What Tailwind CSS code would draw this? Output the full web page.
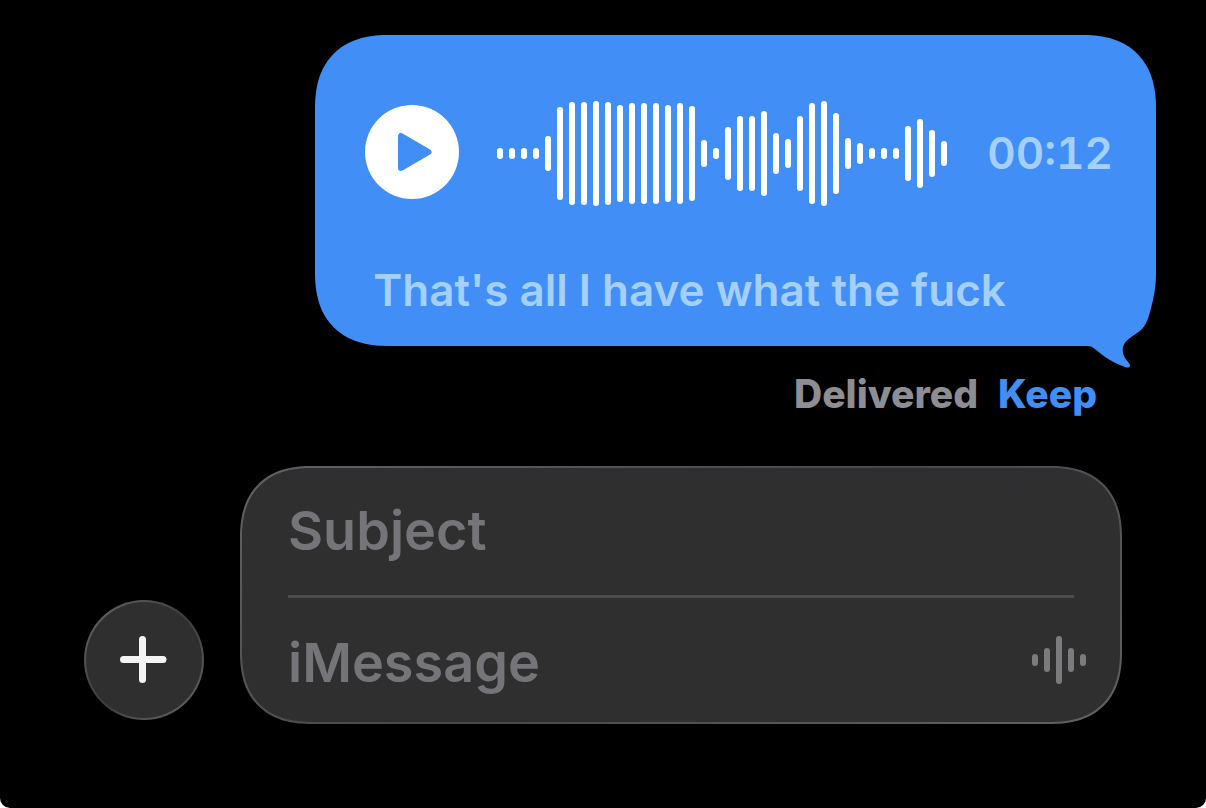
<!DOCTYPE html>
<html lang="en">
  <head>
    <meta charset="UTF-8" />
    <meta name="viewport" content="width=device-width, initial-scale=1.0" />
    <script src="https://cdn.jsdelivr.net/npm/@tailwindcss/browser@4"></script>
    <title>Messages</title>
  </head>
  <body class="bg-white">
    <div
      class="min-h-screen bg-black rounded-b-[10px] flex flex-col font-['Inter',sans-serif]"
    >
      <main class="pt-[35px] pr-[50px] flex flex-col items-end">
        <!-- Audio message -->
        <div
          class="relative w-fit bg-[#418ff6] rounded-[74px] [corner-shape:superellipse(1.25)] pt-[66px] pl-[50px] pr-[43px] pb-[28px]"
        >
          <div class="flex items-center">
            <button type="button" aria-label="Play" class="shrink-0 pb-[3px]">
              <svg class="w-[94px] h-[94px]" viewBox="0 0 94 94">
                <circle cx="47" cy="47" r="47" fill="#fff" />
                <path
                  d="M36 31v32L63.500 47z"
                  fill="#418ff6"
                  stroke="#418ff6"
                  stroke-width="6"
                  stroke-linejoin="round"
                />
              </svg>
            </button>
            <svg
              class="ml-[38px] w-[450px] h-[105px] shrink-0"
              viewBox="0 0 450 105"
              fill="none"
              stroke="#fff"
              stroke-width="6"
              stroke-linecap="round"
            >
              <path
                d="M3 50v5M15 50v5M27 50v5M39 50v5M51 38v29M63 9v87M75 4v97M87 4v97M99 3v99M111 4v97M123 7v91M135 5v95M147 5v95M159 5v95M171 7v91M183 5v95M195 8v89M207 42v21M219 50v5M231 29v47M243 18v69M255 18v69M267 13v79M279 35v35M291 41v23M303 18v69M315 5v95M327 3v99M339 15v75M351 40v25M363 45v15M375 50v5M387 50v5M399 50v5M411 28v49M423 21v63M435 32v41M447 43v19"
              />
            </svg>
            <span
              class="ml-[40px] pb-[2px] text-[44px] leading-[52px] font-semibold tabular-nums text-[#a5d0fd]"
              >00:12</span
            >
          </div>
          <p
            class="mt-[56px] ml-2 text-[44px] leading-[56px] font-semibold text-[#a5d0fd]"
          >
            That's all I have what the fuck
          </p>
          <!-- Bubble tail -->
          <svg
            class="absolute right-0 bottom-[-22px] w-[80px] h-[70px]"
            viewBox="0 0 80 70"
          >
            <path d="M80 0V70H0V48H14L47 36L78 0Z" fill="#000" />
            <path
              d="M0 0H77.500C74 14 72 25 66 31C62 35 57 37 54 40C46 45 45 53 49 60C51 63 54 66 54 67C54 70 52 70 49 69C33 64 22 53 16 49C14 48 13 48 10 48H0Z"
              fill="#418ff6"
            />
          </svg>
        </div>
        <p
          class="mt-[24px] mr-[59px] flex gap-[20px] text-[39px] leading-[48px] font-extrabold text-[#8e8d93]"
        >
          Delivered
          <button type="button" class="text-[#418ff6]">Keep</button>
        </p>
      </main>

      <!-- Composer -->
      <form class="mt-auto px-[84px] pb-[84px] flex items-end gap-9">
        <button
          type="button"
          aria-label="Add attachment"
          class="shrink-0 w-[120px] h-[120px] mb-1 rounded-full p-[2px] bg-linear-135 from-[#6a6a6a] via-[#3c3c3c] to-[#6a6a6a]"
        >
          <span
            class="w-full h-full rounded-full bg-[#2f2f2f] flex items-center justify-center"
          >
            <svg
              class="w-12 h-12"
              viewBox="0 0 48 48"
              stroke="#f4f4f4"
              stroke-width="7"
              stroke-linecap="round"
            >
              <path d="M3.500 23.500h39.500M22.500 3.500v40" />
            </svg>
          </span>
        </button>
        <div
          class="flex-1 min-w-0 rounded-[72px] [corner-shape:superellipse(1.25)] p-[2px] bg-linear-150 from-[#626264] via-[#48484a] to-[#626264]"
        >
          <div
            class="rounded-[70px] [corner-shape:superellipse(1.25)] bg-linear-to-b from-[#2f2f31] to-[#2f2f2f] pl-[46px] pr-[34px]"
          >
            <div class="mr-3 border-b-3 border-[#4c4b4d]">
              <input
                type="text"
                aria-label="Subject"
                placeholder="Subject"
                class="block w-full h-[127px] pb-[2px] text-[54px] font-semibold text-white placeholder:text-[#747479] outline-none"
              />
            </div>
            <div class="flex items-center">
              <input
                type="text"
                aria-label="iMessage"
                placeholder="iMessage"
                class="block flex-1 min-w-0 h-[124px] pt-[4px] text-[54px] font-semibold text-white placeholder:text-[#747479] outline-none"
              />
              <button type="button" aria-label="Record audio">
                <svg
                  class="w-[54px] h-12"
                  viewBox="0 0 54 48"
                  stroke="#7b7b7d"
                  stroke-width="6"
                  stroke-linecap="round"
                >
                  <path d="M3 21v6M15 15v18M27 3v42M39 15v18M51 21v6" />
                </svg>
              </button>
            </div>
          </div>
        </div>
      </form>
    </div>
  </body>
</html>
